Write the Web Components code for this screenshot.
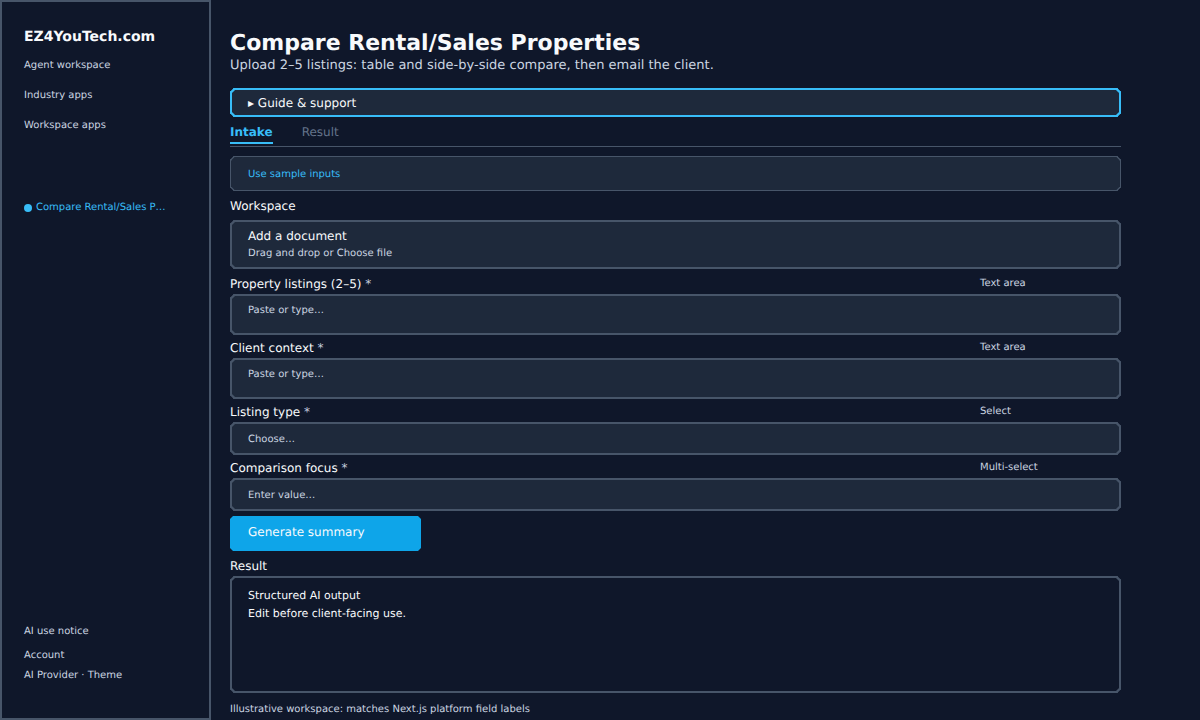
<!DOCTYPE html>
<html><head><meta charset="utf-8"><style>
html,body{margin:0;height:720px;overflow:hidden;background:#0f172a;font-family:"DejaVu Sans",sans-serif;text-rendering:geometricPrecision}
</style></head><body>
<template id="t-shell"><style>
:host{display:grid;grid-template-columns:211px 1fr;height:720px;background:#0f172a;color:#f8fafc}
main{padding:0 0 0 19px;width:891px;display:flex;flex-direction:column}
</style><slot name="side"></slot><main><slot></slot></main></template>

<template id="t-side"><style>
:host{display:flex;flex-direction:column;box-sizing:border-box;height:720px;border:2px solid #475569;background:#0f172a;padding:27px 0 0 22px;font-size:10px;color:#cbd5e1}
.brand{font-size:14px;font-weight:700;color:#f8fafc;line-height:17px;margin-bottom:14px}
.n{line-height:12px;margin-bottom:18px}
.on{color:#38bdf8;display:flex;align-items:center;gap:4px;margin-top:52px;line-height:12px}
.on i{width:8px;height:8px;border-radius:50%;background:#38bdf8}
.foot{margin-top:auto;padding-bottom:36px}
.foot div{line-height:12px}
</style><div class="brand">EZ4YouTech.com</div><div class="n">Agent workspace</div><div class="n">Industry apps</div><div class="n">Workspace apps</div>
<div class="on"><i></i><span>Compare Rental/Sales P…</span></div>
<div class="foot"><div style="margin-bottom:12px">AI use notice</div><div style="margin-bottom:8px">Account</div><div>AI Provider · Theme</div></div></template>

<template id="t-head"><style>
:host{display:block;padding-top:31px}
h1{margin:0;font-size:22px;line-height:26px;font-weight:700;color:#f8fafc}
p{margin:0;font-size:13px;line-height:18px;color:#cbd5e1}
</style><h1><slot name="t"></slot></h1><p><slot name="s"></slot></p></template>

<template id="t-box"><style>
:host{display:flex;box-sizing:border-box;flex-direction:column;border:1px solid #475569;border-radius:4px;corner-shape:bevel;background:#1e293b;padding:0 17px;font-size:10px;color:#cbd5e1}
:host([thick]){border-width:2px;padding:0 16px}
:host([active]){border:2px solid #38bdf8;color:#f8fafc;font-size:12px;justify-content:center;padding:0 16px}
:host([dark]){background:#0f172a;color:#f8fafc;font-size:11px;line-height:18px}
</style><slot></slot></template>

<template id="t-tabs"><style>
:host{display:flex;gap:29px;height:30px;box-sizing:border-box;border-bottom:1px solid #475569;font-size:12px}
span{height:26px;line-height:30px;color:#64748b}
span.a{color:#38bdf8;font-weight:700;border-bottom:2px solid #38bdf8;height:25px}
</style><span class="a">Intake</span><span>Result</span></template>

<template id="t-label"><style>
:host{display:grid;grid-template-columns:750px 1fr;font-size:12px;color:#f8fafc;line-height:16px}
.k{font-size:10px;color:#cbd5e1;line-height:14px;padding-top:1px}
</style><span><slot></slot></span><span class="k"><slot name="kind"></slot></span></template>

<template id="t-btn"><style>
:host{display:block;box-sizing:border-box;width:191px;height:35px;background:#0ea5e9;border-radius:3px;corner-shape:bevel;padding:0 18px;font-size:12px;line-height:32px;color:#f8fafc}
</style><slot></slot></template>

<script>
for(const [n,id] of [['ez-shell','t-shell'],['ez-side','t-side'],['ez-head','t-head'],['ez-box','t-box'],['ez-tabs','t-tabs'],['ez-label','t-label'],['ez-btn','t-btn']]){
customElements.define(n,class extends HTMLElement{constructor(){super();this.attachShadow({mode:'open'}).appendChild(document.getElementById(id).content.cloneNode(true))}})}
</script>

<ez-shell>
<ez-side slot="side"></ez-side>
<ez-head><span slot="t">Compare Rental/Sales Properties</span><span slot="s">Upload 2–5 listings: table and side-by-side compare, then email the client.</span></ez-head>
<ez-box active style="height:29px;margin-top:13px"><div>▸ Guide &amp; support</div></ez-box>
<ez-tabs></ez-tabs>
<ez-box style="height:35px;margin-top:9px;justify-content:center;color:#38bdf8;padding-top:1px">Use sample inputs</ez-box>
<ez-label style="margin-top:7px">Workspace</ez-label>
<ez-box thick style="height:49px;margin-top:6px;justify-content:center"><div style="font-size:12px;color:#f8fafc;line-height:16px">Add a document</div><div style="line-height:14px;margin-top:3px">Drag and drop or Choose file</div></ez-box>
<ez-label style="margin-top:7px">Property listings (2–5) <span style="color:#cbd5e1">*</span><span slot="kind">Text area</span></ez-label>
<ez-box thick style="height:41px;margin-top:2px;padding-top:8px;line-height:14px">Paste or type…</ez-box>
<ez-label style="margin-top:5px">Client context <span style="color:#cbd5e1">*</span><span slot="kind">Text area</span></ez-label>
<ez-box thick style="height:41px;margin-top:2px;padding-top:8px;line-height:14px">Paste or type…</ez-box>
<ez-label style="margin-top:5px">Listing type <span style="color:#cbd5e1">*</span><span slot="kind">Select</span></ez-label>
<ez-box thick style="height:33px;margin-top:2px;justify-content:center;padding-top:2px;line-height:14px">Choose…</ez-box>
<ez-label style="margin-top:5px">Comparison focus <span style="color:#cbd5e1">*</span><span slot="kind">Multi-select</span></ez-label>
<ez-box thick style="height:33px;margin-top:2px;justify-content:center;padding-top:2px;line-height:14px">Enter value…</ez-box>
<ez-btn style="margin-top:5px">Generate summary</ez-btn>
<ez-label style="margin-top:7px">Result</ez-label>
<ez-box thick dark style="height:117px;margin-top:2px;padding-top:9px"><div>Structured AI output</div><div>Edit before client-facing use.</div></ez-box>
<div style="font-size:10px;color:#cbd5e1;line-height:14px;margin-top:10px">Illustrative workspace: matches Next.js platform field labels</div>
</ez-shell>
</body></html>
